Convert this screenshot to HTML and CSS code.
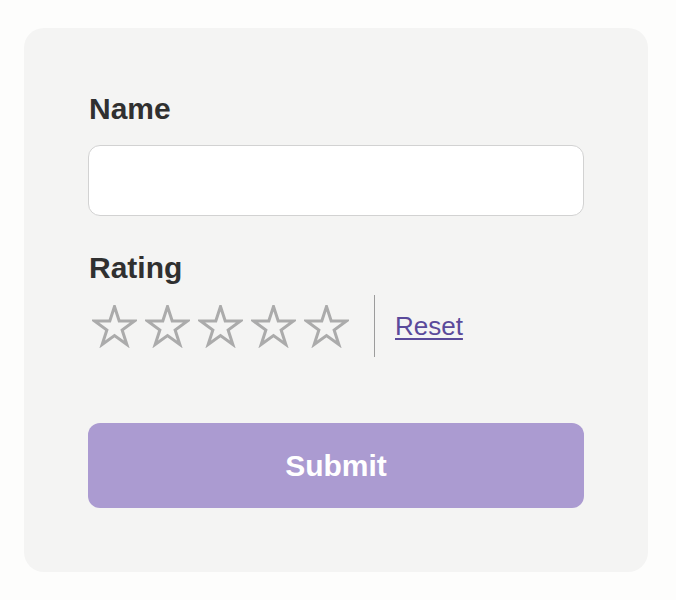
FILE: index.html
```html
<!DOCTYPE html>
<html lang="en">
<head>
<meta charset="utf-8">
<title>Rating form</title>
<link rel="stylesheet" href="styles.css">
</head>
<body>
<div class="page">
  <form class="card">
    <label class="label" for="name">Name</label>
    <input class="input" id="name" type="text">
    <div class="label label-rating">Rating</div>
    <div class="rating-row">
      <div class="stars">
        <svg class="star" viewBox="0 0 45 43"><path d="M22.5 1.5 L27.21 16.01 L42.47 16.01 L30.13 24.98 L34.84 39.49 L22.5 30.52 L10.16 39.49 L14.87 24.98 L2.53 16.01 L17.79 16.01 Z"/></svg>
        <svg class="star" viewBox="0 0 45 43"><path d="M22.5 1.5 L27.21 16.01 L42.47 16.01 L30.13 24.98 L34.84 39.49 L22.5 30.52 L10.16 39.49 L14.87 24.98 L2.53 16.01 L17.79 16.01 Z"/></svg>
        <svg class="star" viewBox="0 0 45 43"><path d="M22.5 1.5 L27.21 16.01 L42.47 16.01 L30.13 24.98 L34.84 39.49 L22.5 30.52 L10.16 39.49 L14.87 24.98 L2.53 16.01 L17.79 16.01 Z"/></svg>
        <svg class="star" viewBox="0 0 45 43"><path d="M22.5 1.5 L27.21 16.01 L42.47 16.01 L30.13 24.98 L34.84 39.49 L22.5 30.52 L10.16 39.49 L14.87 24.98 L2.53 16.01 L17.79 16.01 Z"/></svg>
        <svg class="star" viewBox="0 0 45 43"><path d="M22.5 1.5 L27.21 16.01 L42.47 16.01 L30.13 24.98 L34.84 39.49 L22.5 30.52 L10.16 39.49 L14.87 24.98 L2.53 16.01 L17.79 16.01 Z"/></svg>
      </div>
      <span class="divider"></span>
      <a class="reset" href="#">Reset</a>
    </div>
    <button class="submit" type="button">Submit</button>
  </form>
</div>
</body>
</html>
```
FILE: styles.css
```css
html, body {
  margin: 0;
  padding: 0;
  background: #fdfdfc;
}

body {
  font-family: "Liberation Sans", Arial, sans-serif;
}

.page {
  padding: 28px 28px 28px 24px;
}

.card {
  display: flex;
  flex-direction: column;
  background: #f4f4f3;
  border-radius: 20px;
  padding: 64px;
}

.label {
  display: block;
  font-size: 30px;
  line-height: 34px;
  font-weight: bold;
  color: #303030;
  padding-left: 1px;
}

.input {
  margin-top: 19px;
  height: 71px;
  box-sizing: border-box;
  background: #ffffff;
  border: 1px solid #d2d2d2;
  border-radius: 12px;
  font-size: 24px;
  padding: 0 16px;
}

.label-rating {
  margin-top: 35px;
}

.rating-row {
  display: flex;
  align-items: center;
  height: 62px;
  margin-top: 10px;
}

.stars {
  display: flex;
  gap: 8px;
  padding-left: 4px;
}

.star {
  width: 45px;
  height: 43px;
  display: block;
}

.star path {
  fill: none;
  stroke: #ababab;
  stroke-width: 3;
  stroke-linejoin: miter;
}

.divider {
  width: 1px;
  height: 62px;
  background: #9c9c9c;
  margin: 0 20px 0 25px;
}

.reset {
  font-size: 26px;
  color: #5a4a9b;
  text-decoration: underline;
  text-underline-offset: 3px;
}

.submit {
  margin-top: 66px;
  height: 85px;
  border: none;
  border-radius: 12px;
  background: #ab9bd1;
  color: #ffffff;
  font-family: "Liberation Sans", Arial, sans-serif;
  font-size: 30px;
  font-weight: bold;
}
```
